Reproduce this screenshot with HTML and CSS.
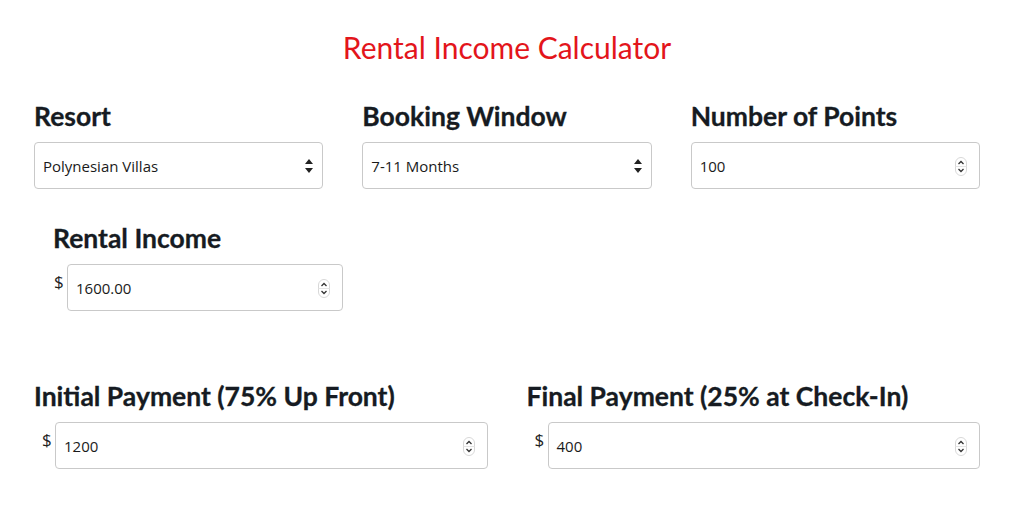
FILE: index.html
```html
<!DOCTYPE html>
<html>
<head>
<meta charset="utf-8">
<link rel="stylesheet" href="styles.css">
</head>
<body>
<div class="page">
  <h1 class="title">Rental Income Calculator</h1>

  <div class="row three">
    <div class="field">
      <h2 class="label">Resort</h2>
      <div class="control">
        <div class="box"><span class="value">Polynesian Villas</span>
          <svg class="sel-icon" width="8" height="16" viewBox="0 0 8 16"><path d="M4 1 L8 6 L0 6 Z M0 10 L8 10 L4 15 Z" fill="#222"/></svg>
        </div>
      </div>
    </div>
    <div class="field">
      <h2 class="label">Booking Window</h2>
      <div class="control">
        <div class="box"><span class="value">7-11 Months</span>
          <svg class="sel-icon" width="8" height="16" viewBox="0 0 8 16"><path d="M4 1 L8 6 L0 6 Z M0 10 L8 10 L4 15 Z" fill="#222"/></svg>
        </div>
      </div>
    </div>
    <div class="field">
      <h2 class="label">Number of Points</h2>
      <div class="control">
        <div class="box num"><span class="value">100</span>
          <svg class="spin" width="12" height="19" viewBox="0 0 12 19"><rect x="0.5" y="0.5" width="11" height="18" rx="5.5" fill="#fff" stroke="#d8d8d8"/><line x1="0.5" y1="9.5" x2="11.5" y2="9.5" stroke="#e4e4e4"/><path d="M3.5 7 L6 4.5 L8.5 7" fill="none" stroke="#333" stroke-width="1.3"/><path d="M3.5 12 L6 14.5 L8.5 12" fill="none" stroke="#333" stroke-width="1.3"/></svg>
        </div>
      </div>
    </div>
  </div>

  <div class="row income">
    <div class="field">
      <h2 class="label">Rental Income</h2>
      <div class="control">
        <span class="dollar">$</span>
        <div class="box num"><span class="value">1600.00</span>
          <svg class="spin" width="12" height="19" viewBox="0 0 12 19"><rect x="0.5" y="0.5" width="11" height="18" rx="5.5" fill="#fff" stroke="#d8d8d8"/><line x1="0.5" y1="9.5" x2="11.5" y2="9.5" stroke="#e4e4e4"/><path d="M3.5 7 L6 4.5 L8.5 7" fill="none" stroke="#333" stroke-width="1.3"/><path d="M3.5 12 L6 14.5 L8.5 12" fill="none" stroke="#333" stroke-width="1.3"/></svg>
        </div>
      </div>
    </div>
  </div>

  <div class="row two">
    <div class="field">
      <h2 class="label">Initial Payment (75% Up Front)</h2>
      <div class="control pay">
        <span class="dollar">$</span>
        <div class="box num"><span class="value">1200</span>
          <svg class="spin" width="12" height="19" viewBox="0 0 12 19"><rect x="0.5" y="0.5" width="11" height="18" rx="5.5" fill="#fff" stroke="#d8d8d8"/><line x1="0.5" y1="9.5" x2="11.5" y2="9.5" stroke="#e4e4e4"/><path d="M3.5 7 L6 4.5 L8.5 7" fill="none" stroke="#333" stroke-width="1.3"/><path d="M3.5 12 L6 14.5 L8.5 12" fill="none" stroke="#333" stroke-width="1.3"/></svg>
        </div>
      </div>
    </div>
    <div class="field">
      <h2 class="label">Final Payment (25% at Check-In)</h2>
      <div class="control pay">
        <span class="dollar">$</span>
        <div class="box num"><span class="value">400</span>
          <svg class="spin" width="12" height="19" viewBox="0 0 12 19"><rect x="0.5" y="0.5" width="11" height="18" rx="5.5" fill="#fff" stroke="#d8d8d8"/><line x1="0.5" y1="9.5" x2="11.5" y2="9.5" stroke="#e4e4e4"/><path d="M3.5 7 L6 4.5 L8.5 7" fill="none" stroke="#333" stroke-width="1.3"/><path d="M3.5 12 L6 14.5 L8.5 12" fill="none" stroke="#333" stroke-width="1.3"/></svg>
        </div>
      </div>
    </div>
  </div>
</div>
</body>
</html>
```
FILE: styles.css
```css
* { box-sizing: border-box; }
html, body { margin: 0; padding: 0; background: #fff; }
body { font-family: "Lato", "Open Sans", sans-serif; color: #161b22; }
.page { padding: 28px 44px 0 34px; }
.title {
  margin: 0;
  text-align: center;
  font-family: "Lato", sans-serif;
  font-weight: 400;
  font-size: 30px;
  line-height: 38px;
  color: #e3151b;
}
.row { display: grid; column-gap: 39px; }
.row.three { grid-template-columns: 1fr 1fr 1fr; margin-top: 35px; }
.row.income { grid-template-columns: 290px; margin-top: 34px; padding-left: 19px; }
.row.two { grid-template-columns: 1fr 1fr; margin-top: 70px; }
.label {
  margin: 0 0 11px 0;
  font-family: "Lato", sans-serif;
  font-weight: 700;
  font-size: 26.5px;
  line-height: 30px;
  color: #161b22;
  white-space: nowrap;
  -webkit-text-stroke: 0.3px #161b22;
}
.control { display: flex; align-items: flex-start; }
.dollar {
  font-family: "Open Sans", sans-serif;
  font-size: 17px;
  line-height: 20px;
  width: 14px;
  margin-top: 8px;
  padding-left: 1px;
  color: #222;
}
.control.pay { padding-left: 8px; }
.control.pay .dollar { width: 13px; padding-left: 0; }
.box {
  flex: 1;
  position: relative;
  height: 47px;
  border: 1px solid #c9c9c9;
  border-radius: 4px;
  display: flex;
  align-items: center;
  padding-left: 8px;
  background: #fff;
}
.value {
  font-family: "Open Sans", sans-serif;
  font-size: 15px;
  color: #1a1a1a;
}
.sel-icon { position: absolute; right: 9px; top: 15px; }
.spin { position: absolute; right: 12px; top: 14px; }
```
